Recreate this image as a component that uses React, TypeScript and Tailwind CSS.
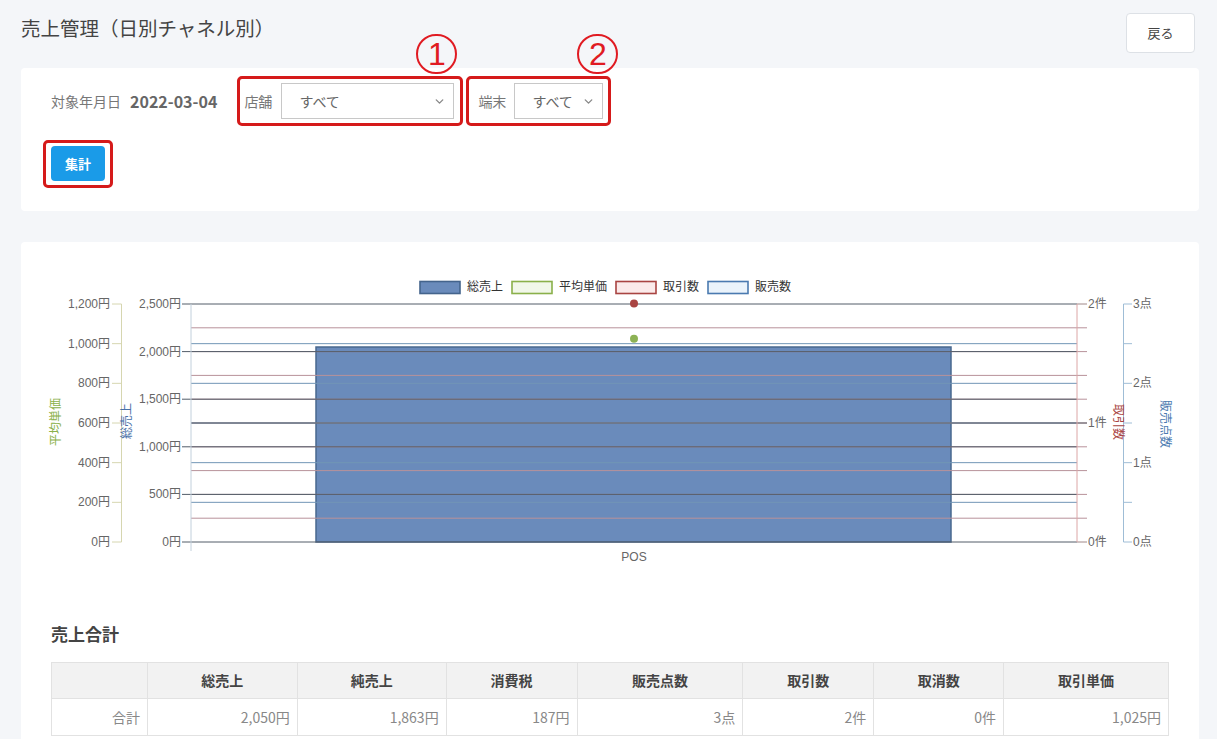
import { ChevronDown } from 'lucide-react';

const chartFont = '"Liberation Sans", "Noto Sans CJK JP", sans-serif';

const columns = [
  { label: '', value: '合計', w: 96 },
  { label: '総売上', value: '2,050円', w: 150 },
  { label: '純売上', value: '1,863円', w: 149 },
  { label: '消費税', value: '187円', w: 131 },
  { label: '販売点数', value: '3点', w: 166 },
  { label: '取引数', value: '2件', w: 131 },
  { label: '取消数', value: '0件', w: 130 },
  { label: '取引単価', value: '1,025円', w: 165 },
];

function Select({ width, textPad }: { width: string; textPad: string }) {
  return (
    <div className={`relative flex items-center h-[36px] border border-[#c8c8c8] bg-white ${width}`}>
      <span className={`text-[14px] text-[#666] ${textPad}`}>すべて</span>
      <ChevronDown className="absolute right-[7px] h-[13px] w-[13px] text-[#888]" strokeWidth={2.5} />
    </div>
  );
}

function Circled({ n, className }: { n: string; className: string }) {
  return (
    <div
      className={`absolute w-[41px] h-[40px] rounded-full border-2 border-[#e01b22] flex items-center justify-center text-[32px] leading-none text-[#e01b22] ${className}`}
      style={{ fontFamily: '"Liberation Sans", sans-serif' }}
    >
      {n}
    </div>
  );
}

function Chart() {
  const T = 304;
  const B = 542;
  const H = B - T;
  const L = 191;
  const R = 1077;
  const yOf = (v: number, max: number) => B - (v / max) * H;

  const red = Array.from({ length: 9 }, (_, i) => yOf(i + 1, 10));
  const blue = Array.from({ length: 7 }, (_, i) => yOf(i, 6));
  const dark = Array.from({ length: 6 }, (_, i) => yOf(i, 5));

  const legend = [
    { x: 420, label: '総売上', fill: '#6a8bbb', stroke: '#44648c' },
    { x: 512, label: '平均単価', fill: '#f1f7e9', stroke: '#8ab04a' },
    { x: 616, label: '取引数', fill: '#fbeaea', stroke: '#a94442' },
    { x: 708, label: '販売数', fill: '#eaf3fb', stroke: '#4a7ab0' },
  ];

  return (
    <svg width="1178" height="330" viewBox="21 242 1178 330" style={{ fontFamily: chartFont }}>
      {/* legend */}
      {legend.map((l) => (
        <g key={l.label}>
          <rect x={l.x} y={281.5} width={40} height={12} fill={l.fill} stroke={l.stroke} strokeWidth={1.6} />
          <text x={l.x + 47} y={291} fontSize={12} fill="#333">{l.label}</text>
        </g>
      ))}

      {/* bar (grid lines run over it) */}
      <rect x={316} y={347} width={635} height={195} fill="#6a8bbb" stroke="#48688f" strokeWidth={1.5} />

      {/* grid */}
      {red.map((y) => (
        <line key={'r' + y} x1={L} x2={R + 10} y1={y} y2={y} stroke="#b8929a" strokeWidth={1} />
      ))}
      {blue.slice(1, 6).map((y) => (
        <line key={'b' + y} x1={L} x2={R} y1={y} y2={y} stroke="#7196b6" strokeWidth={1} />
      ))}
      {dark.map((y) => (
        <line key={'d' + y} x1={182} x2={R} y1={y} y2={y} stroke="#525c68" strokeWidth={1} />
      ))}
      <line x1={R} x2={R + 10} y1={T} y2={T} stroke="#a08888" />
      <line x1={R} x2={R + 10} y1={B} y2={B} stroke="#a08888" />
      <line x1={L} x2={R + 10} y1={yOf(1, 2)} y2={yOf(1, 2)} stroke="#5a5f68" />

      {/* plot borders / axes */}
      <line x1={L} x2={L} y1={T} y2={551} stroke="#c2d0dc" />
      <line x1={R} x2={R} y1={T} y2={B} stroke="#dca6a6" />
      <line x1={121.5} x2={121.5} y1={T} y2={B} stroke="#d6d6b0" />
      {blue.map((y) => (
        <line key={'gt' + y} x1={112} x2={121.5} y1={y} y2={y} stroke="#d6d6b0" />
      ))}
      <line x1={1123.5} x2={1123.5} y1={T} y2={B} stroke="#9fbdd6" />
      {blue.map((y) => (
        <line key={'bt' + y} x1={1123.5} x2={1132} y1={y} y2={y} stroke="#9fbdd6" />
      ))}

      {/* points */}
      <circle cx={634} cy={303.5} r={4} fill="#a94442" />
      <circle cx={634} cy={338.7} r={4} fill="#8db255" />

      {/* axis labels */}
      {[0, 200, 400, 600, 800, 1000, 1200].map((v) => (
        <text key={'g' + v} x={110} y={yOf(v, 1200) + 4} fontSize={12} fill="#666" textAnchor="end">
          {v.toLocaleString('en-US')}円
        </text>
      ))}
      {[0, 500, 1000, 1500, 2000, 2500].map((v) => (
        <text key={'s' + v} x={181} y={yOf(v, 2500) + 4} fontSize={12} fill="#666" textAnchor="end">
          {v.toLocaleString('en-US')}円
        </text>
      ))}
      {[0, 1, 2].map((v) => (
        <text key={'k' + v} x={1088} y={yOf(v, 2) + 4} fontSize={12} fill="#666">
          {v}件
        </text>
      ))}
      {[0, 1, 2, 3].map((v) => (
        <text key={'p' + v} x={1133} y={yOf(v, 3) + 4} fontSize={12} fill="#666">
          {v}点
        </text>
      ))}

      {/* axis titles */}
      <text x={60} y={422} fontSize={12} fill="#8ab04a" textAnchor="middle" transform="rotate(-90 60 422)">平均単価</text>
      <text x={131} y={421} fontSize={12} fill="#4a72a8" textAnchor="middle" transform="rotate(-90 131 421)">総売上</text>
      <text x={1114} y={422} fontSize={12} fill="#a94442" textAnchor="middle" transform="rotate(90 1114 422)">取引数</text>
      <text x={1161} y={424} fontSize={12} fill="#4a7ab0" textAnchor="middle" transform="rotate(90 1161 424)">販売点数</text>

      <text x={634} y={561} fontSize={12} fill="#666" textAnchor="middle">POS</text>
    </svg>
  );
}

export default function App() {
  return (
    <div
      className="min-h-screen bg-[#f4f6f9] pl-[21px] pr-[18px] text-[#333]"
      style={{ fontFamily: '"Noto Sans CJK JP", "Noto Sans", sans-serif' }}
    >
      {/* ─── HEADER ─────────────────────────── */}
      <div className="flex justify-between items-start pt-[13px]">
        <h1 className="text-[19.5px] leading-[30px] text-[#444]">売上管理（日別チャネル別）</h1>
        <button className="mr-[4px] w-[69px] h-[40px] bg-white border border-[#dde1e6] rounded-[4px] text-[13px] text-[#444]">
          戻る
        </button>
      </div>

      {/* ─── FILTERS ────────────────────────── */}
      <div className="mt-[15px] bg-white rounded-[4px] pt-[8px] pb-[23px] pl-[22px] pr-[30px]">
        <div className="flex items-center h-[50px]">
          <span className="ml-[8px] text-[14px] text-[#777]">対象年月日</span>
          <span className="ml-[9px] text-[16px] font-bold text-[#666]">2022-03-04</span>

          <div className="relative ml-[20px] flex items-center gap-[9px] h-[50px] border-[3px] border-[#d51a1a] rounded-[5px] pl-[4px] pr-[6px]">
            <Circled n="1" className="left-[176px] -top-[45px]" />
            <span className="text-[14px] text-[#777]">店舗</span>
            <Select width="w-[173px]" textPad="pl-[17px]" />
          </div>

          <div className="relative ml-[3px] flex items-center gap-[8px] h-[50px] border-[3px] border-[#d51a1a] rounded-[5px] pl-[9px] pr-[5px]">
            <Circled n="2" className="left-[108px] -top-[45px]" />
            <span className="text-[14px] text-[#777]">端末</span>
            <Select width="w-[89px]" textPad="pl-[17px]" />
          </div>
        </div>

        <div className="mt-[14px] inline-flex border-[3px] border-[#d51a1a] rounded-[5px] px-[5px] pt-[3px] pb-[4px]">
          <button className="w-[54px] h-[35px] bg-[#1a9be8] rounded-[4px] text-white text-[13px] font-bold">
            集計
          </button>
        </div>
      </div>

      {/* ─── CHART + TOTALS ─────────────────── */}
      <div className="mt-[31px] bg-white rounded-[4px] pb-[30px]">
        <Chart />

        <div className="px-[30px]">
          <h2 className="mt-[50px] text-[17px] leading-[24px] font-bold text-[#444]">売上合計</h2>
          <table className="mt-[16px] w-full border-collapse text-[14px]">
            <thead>
              <tr className="bg-[#f2f2f2] h-[36px]">
                {columns.map((c) => (
                  <th
                    key={c.label || 'blank'}
                    className="border border-[#e2e2e2] font-bold text-[#444] text-center"
                    style={{ width: c.w }}
                  >
                    {c.label}
                  </th>
                ))}
              </tr>
            </thead>
            <tbody>
              <tr className="h-[37px]">
                {columns.map((c) => (
                  <td key={c.value} className="border border-[#e2e2e2] text-right pr-[7px] text-[#888]">
                    {c.value}
                  </td>
                ))}
              </tr>
            </tbody>
          </table>
        </div>
      </div>
    </div>
  );
}
